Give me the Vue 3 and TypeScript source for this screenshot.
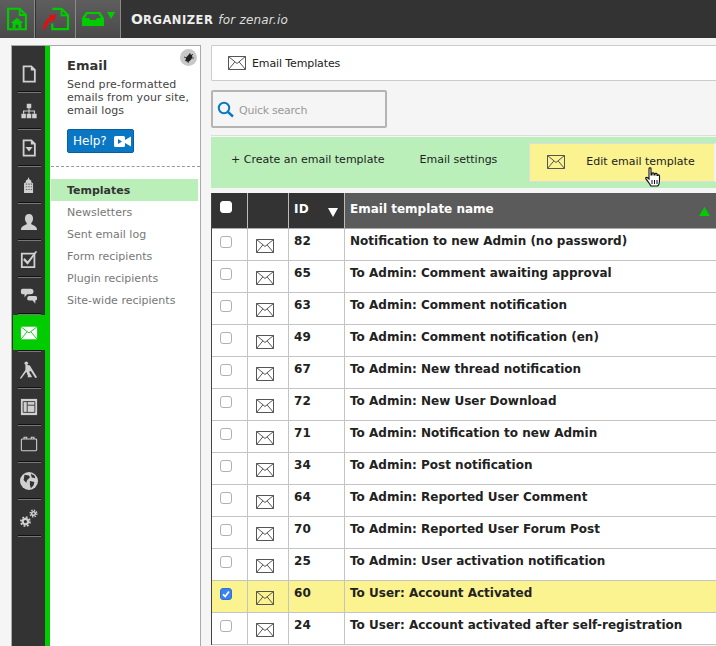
<script setup lang="ts">
interface Row { id: number; name: string; checked?: boolean }
const rows: Row[] = [
  { id: 82, name: 'Notification to new Admin (no password)' },
  { id: 65, name: 'To Admin: Comment awaiting approval' },
  { id: 63, name: 'To Admin: Comment notification' },
  { id: 49, name: 'To Admin: Comment notification (en)' },
  { id: 67, name: 'To Admin: New thread notification' },
  { id: 72, name: 'To Admin: New User Download' },
  { id: 71, name: 'To Admin: Notification to new Admin' },
  { id: 34, name: 'To Admin: Post notification' },
  { id: 64, name: 'To Admin: Reported User Comment' },
  { id: 70, name: 'To Admin: Reported User Forum Post' },
  { id: 25, name: 'To Admin: User activation notification' },
  { id: 60, name: 'To User: Account Activated', checked: true },
  { id: 24, name: 'To User: Account activated after self-registration' },
]
const links = ['Newsletters', 'Sent email log', 'Form recipients', 'Plugin recipients', 'Site-wide recipients']
const navIcons = ['page', 'tree', 'doc', 'tower', 'user', 'check', 'chat', 'mail', 'digger', 'layout', 'cal', 'globe', 'gears']
</script>

<template>
  <div class="page">
    <header class="topbar">
      <div class="tb tb1">
        <svg width="22" height="24" viewBox="0 0 24 27">
          <path d="M2 2h13l7 7v16H2z" fill="none" stroke="#00cc00" stroke-width="2.400" />
          <path d="M15 2v7h7" fill="none" stroke="#00cc00" stroke-width="2" />
          <path d="M12 12l7 6h-2v6h-3.500v-4h-3v4H7v-6H5z" fill="#00cc00" />
        </svg>
      </div>
      <div class="tb tb2">
        <svg width="30" height="24" viewBox="0 0 30 26">
          <path d="M11 2h10l7 7v15H11v-6" fill="none" stroke="#00cc00" stroke-width="2.400" />
          <path d="M21 2v7h7" fill="none" stroke="#00cc00" stroke-width="2" />
          <path d="M1 25c0-7 3-12 8-14l-2-2 8-1-2 8-2-2c-4 2-6 5-8 11z" fill="#e01010" />
        </svg>
      </div>
      <div class="tb tb3">
        <svg width="22" height="14" viewBox="0 0 22 14">
          <path d="M4 0h14l4 6v8H0V6zM3 6h4l1.500 2h5L15 6h4l-2.500-4h-11z" fill="#00cc00" fill-rule="evenodd" />
        </svg>
        <svg class="tb3-arrow" width="8" height="7" viewBox="0 0 8 7"><path d="M0 0h8L4 7z" fill="#00cc00" /></svg>
      </div>
      <div class="brand"><b>O<span class="sc">RGANIZER</span></b> <i>for zenar.io</i></div>
    </header>

    <div class="body">
      <aside class="side">
        <nav class="nav">
          <div v-for="n in navIcons" :key="n" class="nav-item" :class="{ active: n === 'mail' }">
            <svg width="18" height="18" viewBox="0 0 20 20" class="nav-ico">
              <template v-if="n === 'page'">
                <path d="M4 1.500h8.500l4 4v13H4z" fill="none" stroke="#d0d0d0" stroke-width="2" />
                <path d="M12 1v5h5z" fill="#d0d0d0" />
              </template>
              <template v-else-if="n === 'tree'">
                <path d="M7.500 2h5v5h-5zM1.500 13h5v5h-5zM7.500 13h5v5h-5zM13.500 13h5v5h-5z" fill="#d0d0d0" />
                <path d="M10 7v6M4 13v-3h12v3" fill="none" stroke="#d0d0d0" stroke-width="1.300" />
              </template>
              <template v-else-if="n === 'doc'">
                <path d="M4 1.500h8.500l4 4v13H4z" fill="none" stroke="#d0d0d0" stroke-width="2" />
                <path d="M12 1v5h5z" fill="#d0d0d0" />
                <path d="M6 9h8l-4 5z" fill="#d0d0d0" />
              </template>
              <template v-else-if="n === 'tower'">
                <path d="M4.500 19V8l2-1V5l2-1 1-3 1 3 2 1v2l2 1v11z" fill="#d0d0d0" />
                <path d="M6.500 9h1.500M9.300 9h1.500M12 9h1.500M6.500 12h1.500M9.300 12h1.500M12 12h1.500M6.500 15h1.500M9.300 15h1.500M12 15h1.500" stroke="#666" stroke-width="1.200" />
              </template>
              <template v-else-if="n === 'user'">
                <path d="M10 1c3 0 4.500 2 4.500 5 0 2.500-1 4-2 5v1.500c2 1 6.500 2 6.500 6.500H1c0-4.500 4.500-5.500 6.500-6.500V11c-1-1-2-2.500-2-5 0-3 1.500-5 4.500-5z" fill="#d0d0d0" />
              </template>
              <template v-else-if="n === 'check'">
                <path d="M2 4h14v15H2z" fill="none" stroke="#d0d0d0" stroke-width="2" />
                <path d="M5 9l3.500 3.500 9-11.500 1.500 1-10.500 14.500-5-5.500z" fill="#d0d0d0" />
              </template>
              <template v-else-if="n === 'chat'">
                <path d="M3 2h9c2 0 3 1 3 3s-1 3-3 3H8l-3 3.500V8H3C1 8 1 6 1 5s0-3 2-3z" fill="#d0d0d0" />
                <path d="M10 10h7c1.500 0 2 1 2 2.500S18.500 15 17 15v3.500L14 15h-4c-1.500 0-2-1-2-2.500 0-1 1-2.500 2-2.500z" fill="#d0d0d0" />
              </template>
              <template v-else-if="n === 'mail'">
                <path d="M1 3h18v14H1z" fill="#fff" />
                <path d="M1 3l9 7 9-7M1 17l7-8.500M19 17l-7-8.500" fill="none" stroke="#00cc00" stroke-width="1" />
              </template>
              <template v-else-if="n === 'digger'">
                <circle cx="7" cy="2.500" r="2" fill="#d0d0d0" />
                <path d="M6 4l5 1 3 5 3 5 2 3-2 1-5-8-2 1 3 5v1h-5l1-1-2-5-6 8-1-1 6-9z" fill="#d0d0d0" />
              </template>
              <template v-else-if="n === 'layout'">
                <path d="M1 1h18v18H1z" fill="#d0d0d0" />
                <path d="M3.500 4h13v12h-13zM8 4v12M8 8h8.500" fill="none" stroke="#444" stroke-width="1.100" />
              </template>
              <template v-else-if="n === 'cal'">
                <path d="M2.500 4.500h15a1 1 0 0 1 1 1v11a1 1 0 0 1-1 1h-15a1 1 0 0 1-1-1v-11a1 1 0 0 1 1-1z" fill="none" stroke="#d0d0d0" stroke-width="1.200" />
                <path d="M4.500 4.500V2.500h3v2M12.500 4.500V2.500h3v2" fill="none" stroke="#d0d0d0" stroke-width="1.200" />
              </template>
              <template v-else-if="n === 'globe'">
                <circle cx="10" cy="10" r="10" fill="#d0d0d0" />
                <path d="M5 3l5 1 1 2-3 3-1 3-3-3zM11 10l5 1-1 4-3 3-1-4zM12 2l4 2 1 3-4-1z" fill="#333" />
              </template>
              <template v-else-if="n === 'gears'">
                <g fill="none" stroke="#d0d0d0">
                  <circle cx="6" cy="14" r="3" stroke-width="2.400" />
                  <circle cx="6" cy="14" r="5" stroke-width="2" stroke-dasharray="2 1.900" />
                  <circle cx="15" cy="5" r="2" stroke-width="1.800" />
                  <circle cx="15" cy="5" r="3.700" stroke-width="1.600" stroke-dasharray="1.500 1.400" />
                </g>
              </template>
            </svg>
          </div>
        </nav>
        <div class="green-strip"></div>
        <div class="panel">
          <span class="bug">
            <svg width="12" height="12" viewBox="0 0 12 12">
              <ellipse cx="6" cy="6" rx="2.500" ry="4.200" fill="#222" transform="rotate(35 6 6)" />
              <path d="M1 5l3 1M2 9l3-2M5 11l1-3M7 1L6 4M10 2L8 4M11 6L8 6" stroke="#222" stroke-width=".8" />
            </svg>
          </span>
          <div class="intro">
            <h1>Email</h1>
            <p>Send pre-formatted emails from your site, email logs</p>
            <div class="help">Help?
              <svg width="17" height="11" viewBox="0 0 17 11">
                <path d="M0 1.500A1.500 1.500 0 0 1 1.500 0h8A1.500 1.500 0 0 1 11 1.500v8A1.500 1.500 0 0 1 9.500 11h-8A1.500 1.500 0 0 1 0 9.500zM11 4l6-3.500v10L11 7z" fill="#fff" />
                <path d="M4 3l4 2.500L4 8z" fill="#0a77c4" />
              </svg>
            </div>
          </div>
          <div class="dash"></div>
          <div class="cur">Templates</div>
          <div v-for="l in links" :key="l" class="link">{{ l }}</div>
        </div>
      </aside>

      <main class="main">
        <div class="crumb">
          <svg class="env" width="18" height="14" viewBox="0 0 18 14"><path d="M.5.500h17v13H.5zM.5.500L9 7.500l8.500-7M.5 13.500L6.800 6M17.500 13.500L11.200 6" fill="none" stroke="#555" stroke-width="1" /></svg>
          <span>Email Templates</span>
        </div>
        <div class="search">
          <svg width="17" height="17" viewBox="0 0 17 17"><circle cx="7" cy="7" r="5.200" fill="none" stroke="#0a77c4" stroke-width="2" /><path d="M11 11l5 4.500" stroke="#0a77c4" stroke-width="2.400" /></svg>
          <span class="q">Quick search</span>
        </div>
        <div class="rule"></div>
        <div class="actions">
          <span class="act a1">+ Create an email template</span>
          <span class="act a2">Email settings</span>
          <div class="edit">
            <svg class="env" width="18" height="14" viewBox="0 0 18 14"><path d="M.5.500h17v13H.5zM.5.500L9 7.500l8.500-7M.5 13.500L6.800 6M17.500 13.500L11.200 6" fill="none" stroke="#555" stroke-width="1" /></svg>
            <span>Edit email template</span>
          </div>
          <svg class="hand" width="16" height="20" viewBox="0 0 16 20">
            <path d="M4 1.500c0-1 2-1 2 0V8h1V6.500c0-1 2-1 2 0V8h1V7c0-1 2-1 2 0v1.500h.5c0-1 2-.8 2 .5v4c0 3-1 5.500-2 6H6c-1-1-3-5-5-7-1-1 0-2.500 2-1l1 1z" fill="#fff" stroke="#111" stroke-width="1.100" />
            <path d="M7 13v4M9.500 13v4M12 13v4" stroke="#111" stroke-width="1" />
          </svg>
        </div>

        <div class="table">
          <div class="tr head">
            <div class="c c1 dark"><span class="box white"></span></div>
            <div class="c c2 dark"></div>
            <div class="c c3 dark"><b>ID</b><svg class="down" width="10" height="9" viewBox="0 0 10 9"><path d="M0 0h10L5 9z" fill="#fff" /></svg></div>
            <div class="c c4 mid"><b>Email template name</b><svg class="up" width="11" height="9" viewBox="0 0 11 9"><path d="M5.500 0l5.500 9H0z" fill="#00cc00" /></svg></div>
          </div>
          <div v-for="r in rows" :key="r.id" class="tr" :class="{ sel: r.checked }">
            <div class="c c1">
              <span class="box" :class="{ on: r.checked }">
                <svg v-if="r.checked" width="10" height="10" viewBox="0 0 10 10"><path d="M2 5.300l2.200 2.200L8 2.500" fill="none" stroke="#fff" stroke-width="1.800" /></svg>
              </span>
            </div>
            <div class="c c2">
              <svg class="env" width="18" height="14" viewBox="0 0 18 14"><path d="M.5.500h17v13H.5zM.5.500L9 7.500l8.500-7M.5 13.500L6.800 6M17.500 13.500L11.200 6" fill="none" stroke="#555" stroke-width="1" /></svg>
            </div>
            <div class="c c3"><b>{{ r.id }}</b></div>
            <div class="c c4"><b>{{ r.name }}</b></div>
          </div>
        </div>
      </main>
    </div>
  </div>
</template>

<style>
html, body { margin: 0; background: #f5f5f5; overflow: hidden; }
</style>

<style scoped>
.page { width: 716px; height: 646px; overflow: hidden; background: #f5f5f5; font-family: "DejaVu Sans", sans-serif; color: #222; }
.topbar { height: 38px; background: #333; display: flex; align-items: stretch; }
.tb { display: flex; align-items: center; justify-content: center; background: linear-gradient(#5e5e5e, #4a4a4a); border-right: 1px solid #8a8a8a; box-sizing: border-box; }
.tb1 { width: 35px; }
.tb2 { width: 40px; margin-left: 1px; }
.tb3 { width: 45px; padding-right: 0; gap: 3px; }
.tb3-arrow { margin-bottom: 7px; }
.brand { margin-left: 10px; line-height: 38px; color: #eee; font-size: 12px; letter-spacing: .2px; }
.brand b { font-size: 14px; }
.brand .sc { font-size: 11.500px; letter-spacing: .5px; }
.brand i { margin-left: 1px; color: #ddd; }
.body { display: flex; align-items: flex-start; padding: 7px 0 0 11px; }
.side { width: 190px; height: 620px; flex: none; display: flex; box-sizing: border-box; border: 1px solid #aaa; border-bottom: 0; background: #fff; }
.nav { width: 34px; background: #333; display: flex; flex-direction: column; padding-top: 9px; }
.nav-item { height: 37px; flex: none; display: flex; align-items: center; justify-content: center; box-sizing: border-box; position: relative; }
.nav-item::after { content: ""; position: absolute; left: 6px; right: 4px; bottom: 0; height: 1px; background: #111; box-shadow: 0 1px 0 #777; }
.nav-item.active::before { content: ""; position: absolute; left: 1px; right: 0; top: 1px; bottom: 1px; background: #00cc00; }
.nav-ico { display: block; margin-left: 1px; position: relative; }
.green-strip { width: 5px; background: #00cc00; }
.panel { flex: 1; position: relative; font-size: 11px; color: #666; }
.bug { position: absolute; right: 3px; top: 3px; width: 17px; height: 17px; border-radius: 50%; background: #c8c8c8; display: flex; align-items: center; justify-content: center; }
.intro { padding: 12px 8px 0 16px; height: 119px; box-sizing: border-box; margin-left: 0; }
h1 { margin: 0 0 0 1px; font-size: 13px; line-height: 15px; font-weight: bold; color: #333; }
.intro p { margin: 5px 0 0 1px; font-size: 11px; line-height: 13px; color: #444; letter-spacing: .08px; }
.help { margin: 12px 0 0 1px; width: 67px; height: 24px; box-sizing: border-box; background: #0a77c4; border: 1px solid #06609f; border-radius: 2px; color: #fff; font-size: 12px; line-height: 20px; padding-left: 5px; display: flex; align-items: center; gap: 7px; }
.dash { border-top: 1px dashed #999; margin: 1px 0 0 1px; width: 149px; }
.cur { margin: 12px 2px 0 1px; height: 22px; line-height: 23px; background: #bbefba; padding-left: 16px; font-weight: bold; color: #333; }
.link { height: 22px; line-height: 23px; padding-left: 17px; color: #777; }
.main { width: 505px; margin-left: 10px; flex: none; }
.crumb { height: 36px; box-sizing: border-box; background: #fff; border: 1px solid #ccc; border-right: 0; border-radius: 2px 0 0 2px; display: flex; align-items: center; padding-left: 16px; gap: 6px; font-size: 11px; color: #222; letter-spacing: -.12px; }
.search { width: 176px; height: 38px; margin-top: 9px; box-sizing: border-box; border: 2px solid #b4b4b4; border-radius: 2px; display: flex; align-items: center; padding-left: 4px; gap: 5px; font-size: 11px; color: #999; }
.q { letter-spacing: -.25px; padding-top: 2px; }
.rule { height: 1px; background: #ddd; margin-top: 7px; }
.actions { height: 51px; margin-top: 1px; background: #bbefba; position: relative; display: flex; align-items: flex-start; font-size: 11px; color: #222; }
.act { line-height: 13px; margin-top: 16px; white-space: nowrap; flex: none; }
.a1 { margin-left: 20px; }
.a2 { margin-left: 35px; }
.edit { margin-left: 32px; margin-top: 6px; height: 39px; width: 187px; flex: none; box-sizing: border-box; background: #fbf290; border: 1px solid #ddd; border-right: 2px solid #f2f2f2; display: flex; align-items: center; padding: 0 0 2px 17px; gap: 21px; white-space: nowrap; }
.hand { position: absolute; left: 434px; top: 30px; }
.table { margin-top: 5px; border-left: 1px solid #444; font-size: 11px; width: 520px; }
.tr { display: flex; height: 32px; box-sizing: border-box; border-bottom: 1px solid #c4c4c4; background: #fff; }
.tr.sel { background: #fbf290; }
.head { height: 36px; border-bottom: 1px solid #aaa; color: #fff; }
.c { box-sizing: border-box; border-right: 1px solid #c4c4c4; padding: 6px 0 0 5px; line-height: 13px; letter-spacing: .25px; }
.c1 { width: 36px; padding: 7px 0 0 8px; }
.c2 { width: 41px; padding: 10px 0 0 8px; }
.c3 { width: 56px; font-size: 12px; color: #222; }
.c4 { flex: 1; border-right: 0; color: #222; font-size: 12px; letter-spacing: 0; }
.head .c { color: #fff; border-right-color: #bbb; padding-top: 10px; }
.head .c1 { padding: 8px 0 0 8px; }
.dark { background: #333; position: relative; }
.mid { background: #5b5b5b; position: relative; }
.down { position: absolute; left: 39px; top: 15px; }
.up { position: absolute; left: 354px; top: 14px; }
.box { display: flex; align-items: center; justify-content: center; width: 12px; height: 12px; box-sizing: border-box; border: 1px solid #b0b0b0; border-radius: 3px; background: #fff; }
.box.white { border-color: #fff; }
.box.on { background: #3b82f0; border-color: #2f6fd8; }
svg { display: block; flex: none; }
</style>
